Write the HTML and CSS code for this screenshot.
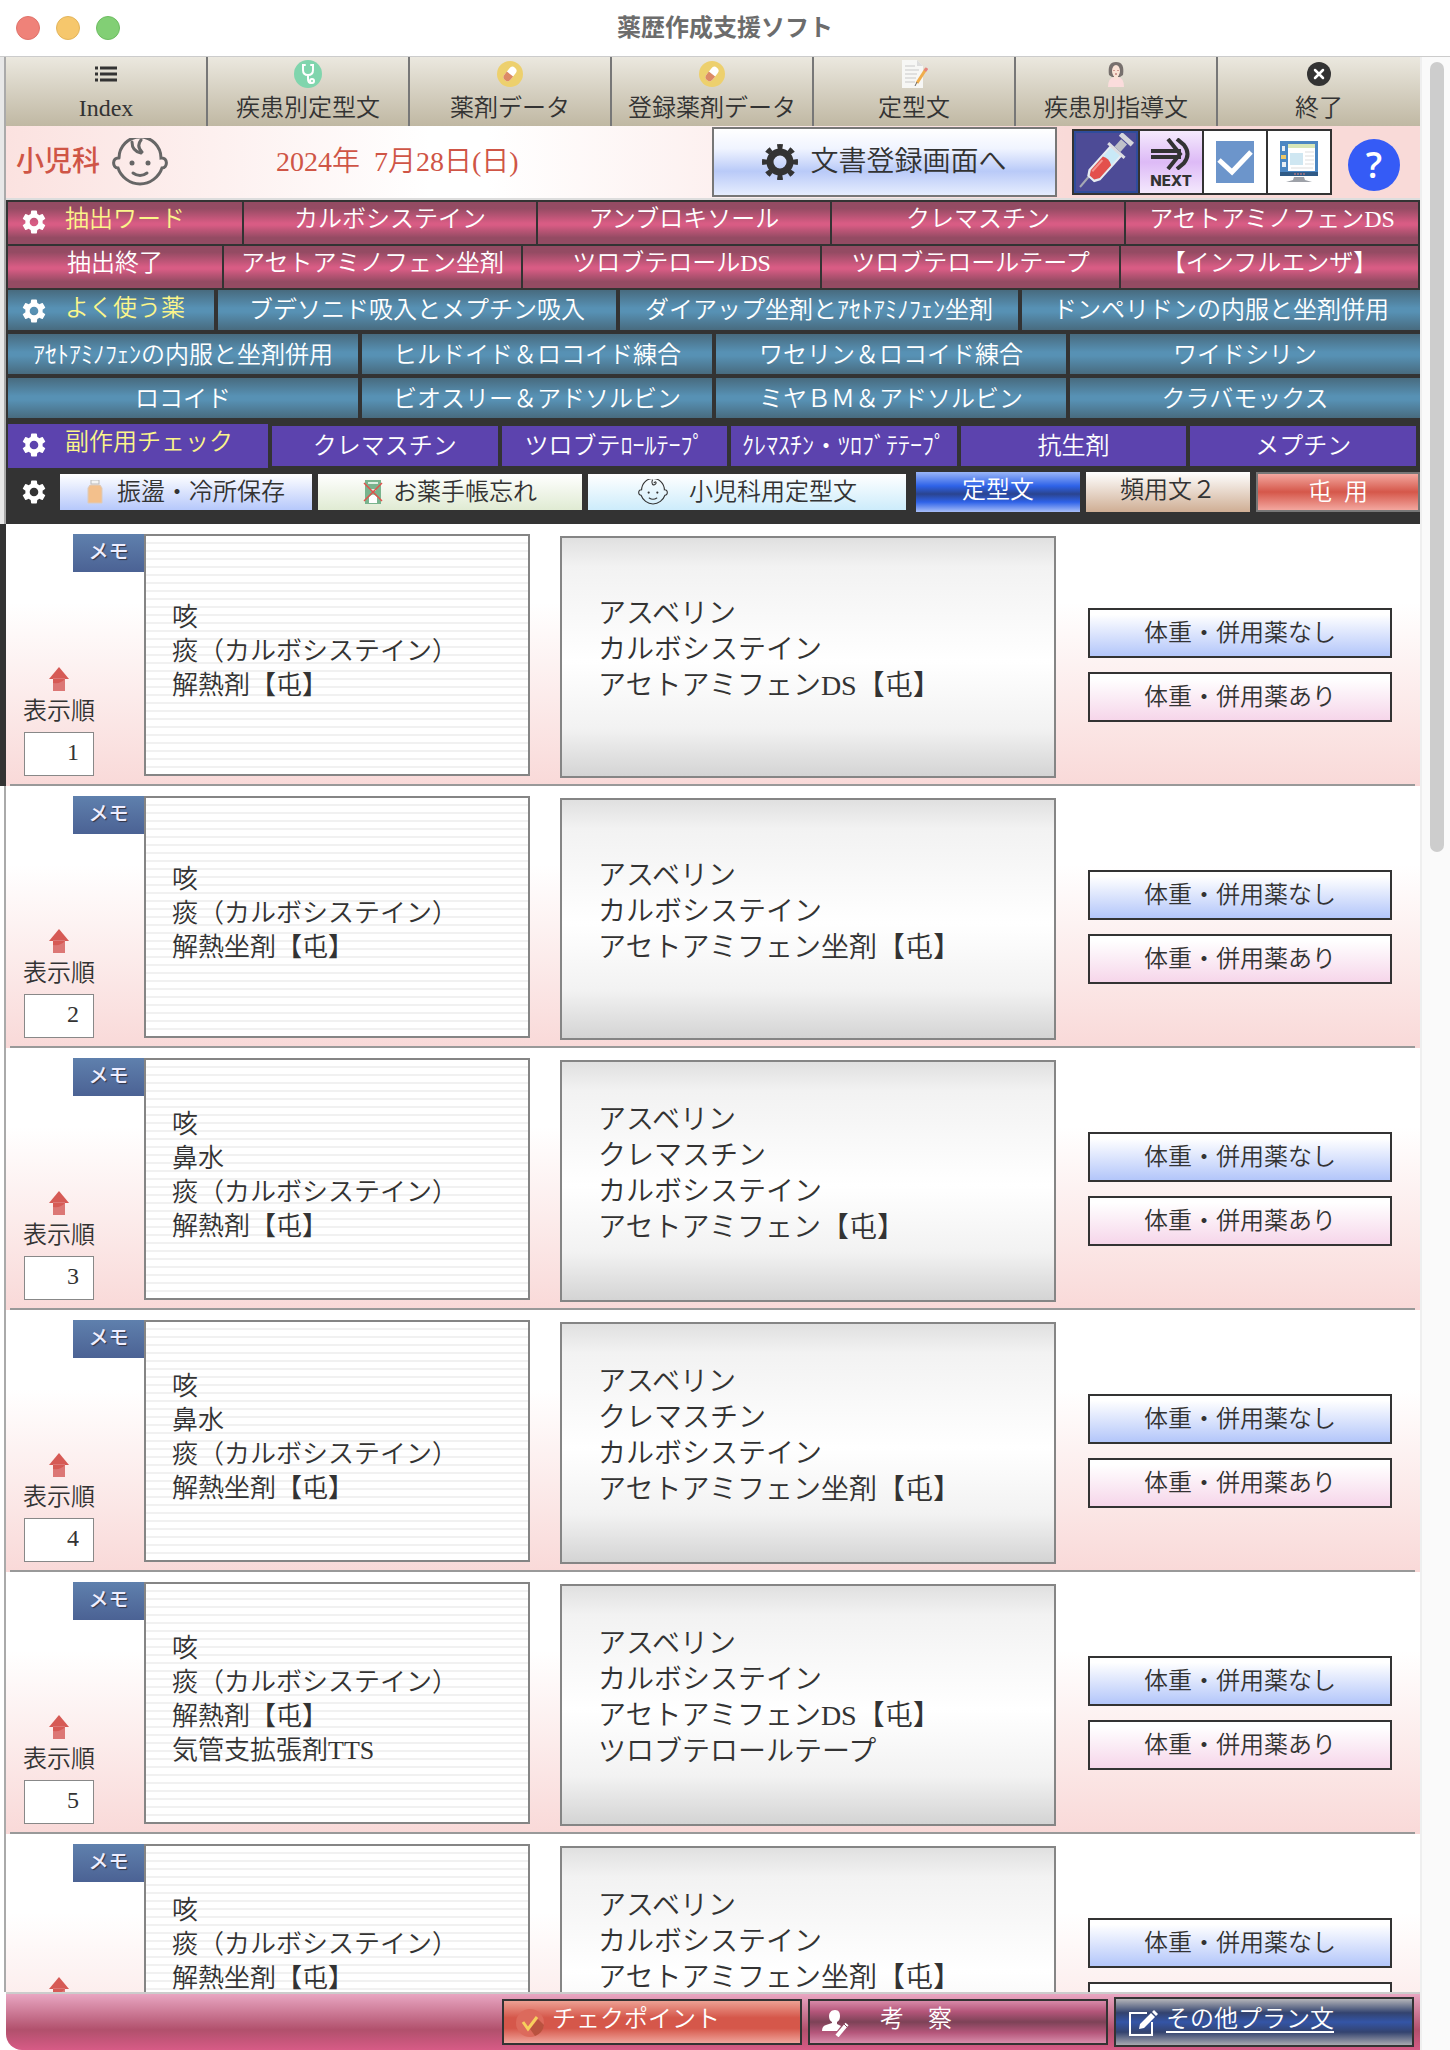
FILE: index.html
```html
<!DOCTYPE html>
<html lang="ja">
<head>
<meta charset="utf-8">
<meta name="viewport" content="width=device-width, initial-scale=1">
<title>薬歴作成支援ソフト</title>
<link rel="stylesheet" href="styles.css">
</head>
<body>
<svg class="sprite" aria-hidden="true">
  <symbol id="gear" viewBox="2 2 20 20"><path d="M19.14 12.94c.04-.3.06-.61.06-.94 0-.32-.02-.64-.07-.94l2.03-1.58a.49.49 0 0 0 .12-.61l-1.92-3.32a.49.49 0 0 0-.59-.22l-2.39.96a7 7 0 0 0-1.62-.94l-.36-2.54a.48.48 0 0 0-.48-.41h-3.84a.47.47 0 0 0-.47.41l-.36 2.54c-.59.24-1.13.57-1.62.94l-2.39-.96a.48.48 0 0 0-.59.22L2.74 8.87a.47.47 0 0 0 .12.61l2.03 1.58c-.05.3-.09.63-.09.94s.02.64.07.94l-2.03 1.58a.49.49 0 0 0-.12.61l1.92 3.32c.12.22.37.29.59.22l2.39-.96c.5.38 1.03.7 1.62.94l.36 2.54c.05.24.24.41.48.41h3.84c.24 0 .44-.17.47-.41l.36-2.54a6.8 6.8 0 0 0 1.62-.94l2.39.96c.22.08.47 0 .59-.22l1.92-3.32a.47.47 0 0 0-.12-.61zM12 15.6a3.6 3.6 0 1 1 0-7.2 3.6 3.6 0 0 1 0 7.2z"/></symbol>
  <symbol id="cog" viewBox="0 0 36 36"><g fill="none" stroke="#333"><circle cx="18" cy="18" r="10" stroke-width="7"/><circle cx="18" cy="18" r="15.500" stroke-width="5" pathLength="32" stroke-dasharray="1.800 2.200" stroke-dashoffset=".9"/></g></symbol>
  <symbol id="baby" viewBox="0 0 56 48"><g fill="none" stroke="currentColor" stroke-width="3" stroke-linecap="round"><path d="M7 20a21 21 0 0 1 42 0c7-1 7 10 1 10-3 9-12 16-22 16S9 39 6 30c-6 0-6-11 1-10"/><path d="M20 4c0 7 4 10 9 11M29 2c-4 5-2 9 1 12M21 35q7 5 14 0"/></g><circle cx="20" cy="25" r="2.500" fill="currentColor"/><circle cx="36" cy="25" r="2.500" fill="currentColor"/></symbol>
  <symbol id="baby-thin" viewBox="0 0 56 48"><g fill="none" stroke="currentColor" stroke-width="2" stroke-linecap="round"><path d="M7 20a21 21 0 0 1 42 0c7-1 7 10 1 10-3 9-12 16-22 16S9 39 6 30c-6 0-6-11 1-10"/><path d="M27 2c-3 6 1 11 5 8s0-7-2-3M21 35q7 5 14 0"/></g><circle cx="20" cy="25" r="2" fill="currentColor"/><circle cx="36" cy="25" r="2" fill="currentColor"/></symbol>
  <symbol id="pill" viewBox="0 0 28 28"><circle cx="14" cy="14" r="13" fill="#edd06d"/><g transform="rotate(38 14 14)"><rect x="10" y="6" width="8" height="16" rx="4" fill="#fff"/><path d="M10 14h8v4a4 4 0 0 1-8 0z" fill="#dc8a66"/></g></symbol>
  <symbol id="arrow-up" viewBox="0 0 20 24"><path d="M10 0l10 12H0z" fill="#d65a55"/><path d="M4 11h12v13H4z" fill="#dc7775"/><path d="M4 12h12q-4 5-12 4z" fill="#d65a55"/></symbol>
</svg>

<header class="titlebar">
  <div class="lights"><span class="light red"></span><span class="light amber"></span><span class="light green"></span></div>
  <h1>薬歴作成支援ソフト</h1>
</header>

<div class="window">
<div class="body">
  <div class="top">
    <nav class="toolbar">
      <button><svg width="24" height="28" viewBox="0 0 24 28"><path d="M1 8h3M6 8h17M1 14h3M6 14h17M1 20h3M6 20h17" stroke="#333" stroke-width="3"/></svg>Index</button>
      <button><svg width="28" height="28" viewBox="0 0 28 28"><circle cx="14" cy="14" r="14" fill="#80d5ad"/><g fill="none" stroke="#fff" stroke-width="2" stroke-linecap="round"><path d="M11 5H9v5q0 5 5 5t5-5V5h-2M14 15v4q0 4 3 4"/><circle cx="18" cy="21" r="2"/></g></svg>疾患別定型文</button>
      <button><svg width="28" height="28"><use href="#pill"/></svg>薬剤データ</button>
      <button><svg width="28" height="28"><use href="#pill"/></svg>登録薬剤データ</button>
      <button><svg width="28" height="28" viewBox="0 0 28 28"><path d="M2 0h15l6 6v22H2z" fill="#f7f7f5"/><path d="M17 0v6h6z" fill="#ddd"/><path d="M5 6h10M5 10h14M5 14h12M5 18h11M5 22h10" stroke="#c9c9c9"/><path d="M26 9L17 23" stroke="#f0ad4c" stroke-width="3"/><path d="M27 8l-2 3" stroke="#e5827e" stroke-width="3"/><path d="M17 22l-2 4" stroke="#666"/></svg>定型文</button>
      <button><svg width="28" height="28" viewBox="0 0 28 28"><path d="M7 15Q5 2 14 2t7 13l-3 2h-8z" fill="#77706d"/><ellipse cx="14" cy="11" rx="4" ry="6" fill="#fae2d5"/><path d="M6 27q0-9 6-10h4q6 1 6 10z" fill="#fbdcdc"/><path d="M12 15h4v3l-2 2-2-2z" fill="#fae2d5"/><path d="M12 10v1M16 10v1M13 14h2" stroke="#a55"/></svg>疾患別指導文</button>
      <button><svg width="24" height="28" viewBox="0 0 24 28"><circle cx="12" cy="14" r="12" fill="#333"/><path d="M8 10l8 8M16 10l-8 8" stroke="#fff" stroke-width="2.500" stroke-linecap="round"/></svg>終了</button>
    </nav>

    <div class="infobar">
      <strong class="dept">小児科</strong>
      <svg class="baby" width="56" height="48"><use href="#baby"/></svg>
      <time class="date" datetime="2024-07-28">2024年&nbsp; 7月28日(日)</time>
      <button class="register"><svg width="36" height="36"><use href="#cog"/></svg>文書登録画面へ</button>
      <div class="tools">
        <button class="tool syringe" aria-label="注射"><svg width="58" height="58" viewBox="0 0 58 58"><path d="M3 54L14 41" stroke="#a5a8b4" stroke-width="2"/><g transform="rotate(42 29 29)"><path d="M22 14h14v32l-3 5h-8l-3-5z" fill="#c9e9f7" stroke="#e8edf2" stroke-width="2"/><path d="M23 27q6-3 12 1v17l-3 5h-6l-3-5z" fill="#e3504c"/><path d="M25 30v15" stroke="#f4938d" stroke-width="2"/><path d="M18 12h22v3H18z" fill="#dcdde2"/><path d="M25 2h8v10h-8z" fill="#bfc1c9"/><path d="M21-4h16v5H21z" fill="#d5d6dc"/></g></svg></button>
        <button class="tool next"><svg width="40" height="32" viewBox="0 0 40 32"><g fill="none" stroke="#333" stroke-width="4"><path d="M0 13h30M0 19h30M17 1l12 15-12 15M26 1l7 6q7 9 0 18l-7 6"/></g></svg>NEXT</button>
        <button class="tool" aria-label="チェック"><svg width="38" height="42" viewBox="0 0 38 42"><path d="M0 0h38v42H0z" fill="#6c95cb"/><path d="M3 19l13 12L35 11" fill="none" stroke="#fff" stroke-width="5"/></svg></button>
        <button class="tool" aria-label="画面"><svg width="40" height="42" viewBox="0 0 40 42"><path d="M1 0h38v35H1z" fill="#4b86c2"/><path d="M9 3h27v27H9z" fill="#fff"/><path d="M9 3h27v4H9z" fill="#d7e6b8"/><path d="M11 12h13v12H11z" fill="#cfe7f2"/><path d="M26 11h9M26 15h9M26 19h9M26 23h9M12 27h22" stroke="#ddd"/><path d="M3 5h3v5H3zM3 21h4v5H3z" fill="#e8eef4"/><path d="M2 14h5v4H2z" fill="#efc766"/><path d="M1 31h38v4H1z" fill="#2f5a86"/><path d="M15 33h12" stroke="#e5827e" stroke-dasharray="2 1"/><path d="M15 36h10l1 3 7 2H7l7-2z" fill="#9da1a8"/></svg></button>
      </div>
      <button class="help" aria-label="ヘルプ">?</button>
    </div>

    <div class="panel">
      <div class="row rose words">
        <button class="label"><svg width="24" height="24"><use href="#gear"/></svg>抽出ワード</button>
        <button>カルボシステイン</button><button>アンブロキソール</button><button>クレマスチン</button><button>アセトアミノフェンDS</button>
      </div>
      <div class="row rose words-more">
        <button>抽出終了</button><button>アセトアミノフェン坐剤</button><button>ツロブテロールDS</button><button>ツロブテロールテープ</button><button>【インフルエンザ】</button>
      </div>
      <div class="row teal drugs">
        <button class="label"><svg width="24" height="24"><use href="#gear"/></svg>よく使う薬</button>
        <button>ブデソニド吸入とメプチン吸入</button><button>ダイアップ坐剤と&#xFF71;&#xFF7E;&#xFF84;&#xFF71;&#xFF90;&#xFF89;&#xFF8C;&#xFF6A;&#xFF9D;坐剤</button><button>ドンペリドンの内服と坐剤併用</button>
      </div>
      <div class="row teal quarters">
        <button>&#xFF71;&#xFF7E;&#xFF84;&#xFF71;&#xFF90;&#xFF89;&#xFF8C;&#xFF6A;&#xFF9D;の内服と坐剤併用</button><button>ヒルドイド&#xFF06;ロコイド練合</button><button>ワセリン&#xFF06;ロコイド練合</button><button>ワイドシリン</button>
      </div>
      <div class="row teal quarters">
        <button>ロコイド</button><button>ビオスリー&#xFF06;アドソルビン</button><button>ミヤ&#xFF22;&#xFF2D;&#xFF06;アドソルビン</button><button>クラバモックス</button>
      </div>
      <div class="row violet effects">
        <button class="label"><svg width="24" height="24"><use href="#gear"/></svg>副作用チェック</button>
        <button>クレマスチン</button><button>ツロブテ&#xFF9B;&#xFF70;&#xFF99;&#xFF83;&#xFF70;&#xFF8C;&#xFF9F;</button><button>&#xFF78;&#xFF9A;&#xFF8F;&#xFF7D;&#xFF81;&#xFF9D;・&#xFF82;&#xFF9B;&#xFF8C;&#xFF9E;&#xFF83;&#xFF83;&#xFF70;&#xFF8C;&#xFF9F;</button><button>抗生剤</button><button>メプチン</button>
      </div>
      <div class="row presets">
        <button class="bare" aria-label="設定"><svg width="24" height="24"><use href="#gear"/></svg></button>
        <button class="ice"><svg width="16" height="24" viewBox="0 0 16 24"><path d="M4 0h8v4H4z" fill="#f5f5f5" stroke="#bbb"/><path d="M3 5h10l2 3v15H1V8z" fill="#f3c08c" stroke="#dccbbd"/></svg>振盪・冷所保存</button>
        <button class="leaf"><svg width="20" height="24" viewBox="0 0 20 24"><path d="M2 0h16v24H2z" fill="#79b48d"/><path d="M6 17q4-5 8 0v6H6z" fill="#fff"/><path d="M5 3h10M8 10h5" stroke="#dff0e2" stroke-width="2"/><path d="M1 3l18 18M19 3L1 21" stroke="#e0524c" stroke-width="1.500"/></svg>お薬手帳忘れ</button>
        <button class="sky"><svg width="32" height="26"><use href="#baby-thin"/></svg>小児科用定型文</button>
        <button class="cobalt">定型文</button>
        <button class="sand">頻用文&#xFF12;</button>
        <button class="coral">屯&ensp;用</button>
      </div>
    </div>
  </div>

  <main class="records">
    <article class="record selected">
      <div class="order"><svg width="20" height="24"><use href="#arrow-up"/></svg><label for="n1">表示順</label><input id="n1" value="1"></div>
      <span class="tag">メモ</span>
      <div class="memo">咳<br>痰&#xFF08;カルボシステイン&#xFF09;<br>解熱剤【屯】</div>
      <div class="plan">アスベリン<br>カルボシステイン<br>アセトアミフェンDS【屯】</div>
      <div class="actions"><button class="none">体重・併用薬なし</button><button class="with">体重・併用薬あり</button></div>
    </article>
    <article class="record">
      <div class="order"><svg width="20" height="24"><use href="#arrow-up"/></svg><label for="n2">表示順</label><input id="n2" value="2"></div>
      <span class="tag">メモ</span>
      <div class="memo">咳<br>痰&#xFF08;カルボシステイン&#xFF09;<br>解熱坐剤【屯】</div>
      <div class="plan">アスベリン<br>カルボシステイン<br>アセトアミフェン坐剤【屯】</div>
      <div class="actions"><button class="none">体重・併用薬なし</button><button class="with">体重・併用薬あり</button></div>
    </article>
    <article class="record">
      <div class="order"><svg width="20" height="24"><use href="#arrow-up"/></svg><label for="n3">表示順</label><input id="n3" value="3"></div>
      <span class="tag">メモ</span>
      <div class="memo">咳<br>鼻水<br>痰&#xFF08;カルボシステイン&#xFF09;<br>解熱剤【屯】</div>
      <div class="plan">アスベリン<br>クレマスチン<br>カルボシステイン<br>アセトアミフェン【屯】</div>
      <div class="actions"><button class="none">体重・併用薬なし</button><button class="with">体重・併用薬あり</button></div>
    </article>
    <article class="record">
      <div class="order"><svg width="20" height="24"><use href="#arrow-up"/></svg><label for="n4">表示順</label><input id="n4" value="4"></div>
      <span class="tag">メモ</span>
      <div class="memo">咳<br>鼻水<br>痰&#xFF08;カルボシステイン&#xFF09;<br>解熱坐剤【屯】</div>
      <div class="plan">アスベリン<br>クレマスチン<br>カルボシステイン<br>アセトアミフェン坐剤【屯】</div>
      <div class="actions"><button class="none">体重・併用薬なし</button><button class="with">体重・併用薬あり</button></div>
    </article>
    <article class="record">
      <div class="order"><svg width="20" height="24"><use href="#arrow-up"/></svg><label for="n5">表示順</label><input id="n5" value="5"></div>
      <span class="tag">メモ</span>
      <div class="memo">咳<br>痰&#xFF08;カルボシステイン&#xFF09;<br>解熱剤【屯】<br>気管支拡張剤TTS</div>
      <div class="plan">アスベリン<br>カルボシステイン<br>アセトアミフェンDS【屯】<br>ツロブテロールテープ</div>
      <div class="actions"><button class="none">体重・併用薬なし</button><button class="with">体重・併用薬あり</button></div>
    </article>
    <article class="record">
      <div class="order"><svg width="20" height="24"><use href="#arrow-up"/></svg></div>
      <span class="tag">メモ</span>
      <div class="memo">咳<br>痰&#xFF08;カルボシステイン&#xFF09;<br>解熱坐剤【屯】<br>&nbsp;</div>
      <div class="plan">アスベリン<br>カルボシステイン<br>アセトアミフェン坐剤【屯】<br>&nbsp;</div>
      <div class="actions"><button class="none">体重・併用薬なし</button><button class="with" aria-label="体重・併用薬あり"></button></div>
    </article>
  </main>

  <footer class="footer">
    <button class="check"><svg width="28" height="28" viewBox="0 0 28 28"><circle cx="14" cy="14" r="14" fill="#dc6a5c"/><path d="M14 20l8-10 6 6a14 14 0 0 1-9 11z" fill="#b9523f"/><path d="M7 13l5 7 9-12" fill="none" stroke="#f7cf5c" stroke-width="3"/></svg>チェクポイント</button>
    <button class="study"><svg width="28" height="28" viewBox="0 0 28 28"><path d="M13 1c4 0 5 3 5 6s-1 5-3 6v2l4 2-4 5H0q0-5 4-6l6-2v-1c-2-1-3-3-3-6s2-6 6-6z" fill="#fff"/><path d="M25 15L15 27" stroke="#fff" stroke-width="4"/><path d="M22 15l3 3" stroke="#8d4660"/></svg>考&#x3000;察</button>
    <button class="other"><svg width="30" height="28" viewBox="0 0 30 28"><path d="M19 4H2v22h22V13" fill="none" stroke="#fff" stroke-width="2"/><path d="M11 20l1-5L23 4l4 4-11 11zM24 3l2-2 4 4-2 2z" fill="#fff"/></svg><u>その他プラン文</u></button>
  </footer>
</div>
<div class="scroll"><div class="thumb"></div></div>
</div>
</body>
</html>
```

FILE: styles.css
```css
* { box-sizing: border-box; }

body {
  margin: 0;
  height: 100vh;
  display: flex;
  flex-direction: column;
  overflow: hidden;
  background: #fff;
  color: #333;
  font: 350 24px/32px "Liberation Serif", "Noto Sans CJK JP", serif;
}

button {
  margin: 0;
  padding: 0;
  border: 0;
  font: inherit;
  color: inherit;
  background: none;
  white-space: nowrap;
  display: flex;
  align-items: center;
  justify-content: center;
}

svg { flex: none; }
.sprite { position: absolute; width: 0; height: 0; }

/* Title bar */
.titlebar {
  flex: none;
  height: 57px;
  display: grid;
  grid-template-columns: 1fr auto 1fr;
  align-items: center;
  border-bottom: 1px solid #ccc;
}
.titlebar h1 { margin: 0; font-size: 24px; font-weight: 700; color: #6c6c6c; }
.lights { display: flex; gap: 16px; padding-left: 16px; }
.light { width: 24px; height: 24px; border-radius: 50%; border: 1px solid; }
.red { background: #ef8279; border-color: #e0736b; }
.amber { background: #f6c76c; border-color: #e3b55b; }
.green { background: #82cf75; border-color: #6dbd61; }

.window { flex: 1; min-height: 0; display: flex; }
.body { flex: 1; min-width: 0; display: flex; flex-direction: column; }

.scroll { width: 30px; padding: 5px 6px 0 8px; background: #fafafa; border-left: 2px solid #efefef; }
.thumb { height: 790px; border-radius: 8px; background: #cdcdcd; }

.top { flex: none; padding-left: 6px; background: linear-gradient(to right, #e8e8e8 4px, #aaa 4px 6px, transparent 6px); }

/* Toolbar */
.toolbar { display: grid; grid-template-columns: repeat(7, 1fr); height: 69px; background: linear-gradient(#ebe8df, #c0b8a3); }
.toolbar button { flex-direction: column; justify-content: flex-start; gap: 4px; padding-top: 3px; border-right: 2px solid #777; }
.toolbar button:last-child { border-right: 0; }

/* Department and date */
.infobar {
  height: 74px;
  display: flex;
  align-items: center;
  padding: 0 20px 0 10px;
  font-size: 28px;
  border-bottom: 2px solid #ddd;
  background: linear-gradient(to right, #fbe2e0, #fff 30%, #fff 34%, #f9dad8 75%);
}
.dept { color: #cf5546; font-weight: 500; }
.baby { margin-left: 12px; color: #666; }
.date { margin-left: 108px; color: #cf5546; }
.register { margin-left: auto; width: 345px; height: 70px; gap: 12px; border: 2px solid #777; background: linear-gradient(#fff, #f0f4ff 30%, #b9caf8 64%, #e6edfe); }
.tools { display: flex; margin: 0 16px 0 15px; border: 2px solid #333; }
.tool { width: 64px; height: 62px; flex-direction: column; background: #fff; }
.tool + .tool { border-left: 2px solid #333; }
.tool.syringe { background: #4d4b96; border: 2px solid #2f4c9b; }
.tool.next { background: linear-gradient(#f5eafd, #ddbaf6 50%, #f4e8fd); font: 800 15px/18px Inter, "Liberation Sans", sans-serif; gap: 2px; padding-top: 4px; }
.help { width: 52px; height: 52px; margin-top: 6px; border-radius: 50%; background: #355bf6; color: #fff; font: 600 36px/48px "Open Sans", sans-serif; }

/* Shortcut panel */
.panel { background: #333; color: #fff; padding: 2px 0 12px 2px; display: flex; flex-direction: column; gap: 2px; }
.row { display: grid; gap: 4px; height: 42px; }
.row .label { justify-content: flex-start; gap: 19px; padding-left: 14px; color: #fbf58a; }
.row .label svg, .bare svg { fill: #fff; }
.label svg { margin-top: 6px; }
.rose { gap: 2px; padding-right: 2px; }
.rose button { padding-bottom: 8px; background: linear-gradient(#944b63 15%, #d85c84 50%, #d85c84 55%, #944b63 85%); }
.words { grid-template-columns: 234px repeat(4, minmax(0, 1fr)); }
.words-more { grid-template-columns: 214px repeat(4, minmax(0, 1fr)); }
.teal { margin-bottom: 2px; height: 40px; }
.teal button { background: linear-gradient(#486b7f, #5791b4 45%, #5791b4 55%, #486b7f); }
.drugs { grid-template-columns: 206px repeat(3, minmax(0, 1fr)); }
.drugs .label { padding-bottom: 4px; }
.quarters { grid-template-columns: repeat(4, minmax(0, 1fr)); }
.quarters button { padding-top: 2px; }
.violet { height: 44px; margin-top: 2px; }
.violet button { margin: 2px 0; background: #5c43ae; }
.violet .label { margin: 0; padding-bottom: 8px; }
.effects { grid-template-columns: 260px repeat(5, minmax(0, 1fr)); padding-right: 4px; }
.presets { grid-template-columns: 46px 252fr 264fr 318fr 168fr 164fr 164fr; gap: 6px; height: 40px; margin-top: 2px; color: #333; }
.presets .bare { justify-content: flex-start; padding-left: 14px; }
.ice, .leaf, .sky { height: 36px; align-self: center; gap: 14px; }
.ice { background: linear-gradient(#fff, #b6c8fb); }
.leaf { background: linear-gradient(#fff, #e0ebd3); gap: 10px; }
.sky { background: linear-gradient(#fff, #cdecfb); gap: 20px; }
.cobalt { margin-left: 4px; padding-bottom: 4px; color: #fff; background: linear-gradient(#9ab6f8, #2e62e8 35%, #2a448f 55%, #2e62e8 75%, #a9bff8); }
.sand { background: linear-gradient(#fff, #cfae94); padding-bottom: 4px; }
.coral { color: #fff; border: 2px solid #777; background: linear-gradient(#f3a79f, #d5574a 50%, #f3a79f); }

/* Records */
.records { flex: 1; min-height: 0; overflow: hidden; }
.record {
  height: 262px;
  display: grid;
  grid-template-columns: 67px 71px 416px 528px 304px;
  align-items: start;
  padding: 10px 0 0 6px;
  background:
    linear-gradient(to right, #fff 4px, #aaa 4px 6px, transparent 6px),
    linear-gradient(#999, #999) 10px 100% / calc(100% - 15px) 2px no-repeat,
    linear-gradient(#fff 30%, #f9d9d8);
}
.record.selected {
  background:
    linear-gradient(to right, #333 6px, transparent 6px),
    linear-gradient(#999, #999) 10px 100% / calc(100% - 15px) 2px no-repeat,
    linear-gradient(#fff 30%, #f9d9d8);
}
.order { width: 106px; padding-top: 133px; display: flex; flex-direction: column; align-items: center; }
.order label { margin: 4px 0 5px; }
.order input { width: 70px; height: 44px; padding: 0 14px 4px 0; border: 1px solid #888; background: #fff; color: #333; font: inherit; text-align: right; }
.tag { height: 38px; text-align: center; font-size: 20px; font-weight: 500; line-height: 36px; color: #eef; text-shadow: 1px 1px 1px #334; background: linear-gradient(#5f80ad, #4b6294); }
.memo, .plan { height: 242px; border: 2px solid #858585; align-content: center; }
.memo {
  margin-right: 30px;
  padding: 0 0 6px 26px;
  font-size: 26px;
  line-height: 34px;
  background: linear-gradient(#fff 6px, #f1f1f1 6px) 0 0 / 100% 8px;
}
.plan {
  margin: 2px 32px 0 0;
  padding: 0 0 14px 36px;
  font-size: 28px;
  line-height: 36px;
  background: linear-gradient(#e0e0e0, #f2f2f2 12%, #fff 52%, #f2f2f2 80%, #d4d4d4);
}
.actions { display: grid; gap: 14px; padding-top: 74px; }
.actions button { height: 50px; border: 2px solid #333; }
.none { background: linear-gradient(#fff 10%, #b3c6fa); }
.with { background: linear-gradient(#fff 10%, #f6d6ea); }

/* Footer */
.footer {
  flex: none;
  height: 58px;
  display: flex;
  justify-content: flex-end;
  align-items: center;
  gap: 6px;
  padding-right: 6px;
  margin-left: 6px;
  border-top: 2px solid #ccc;
  border-bottom-left-radius: 16px;
  color: #fff;
  background: linear-gradient(#e9a6c2, #b1506c 64%, #d75b86);
}
.footer button { width: 300px; height: 46px; justify-content: flex-start; border: 2px solid #333; padding: 0 0 6px 12px; gap: 8px; }
.footer svg { margin-top: 8px; }
.check { background: linear-gradient(#eda093, #d5574a 40%, #d5574a 65%, #f0a59c); }
.footer .study { gap: 30px; background: linear-gradient(#d889a8, #b4567a 25%, #7d4257 50%, #b4567a 75%, #d88dab); }
.footer .other { height: 50px; background: linear-gradient(#b5b5b9, #33436f 30%, #3455a6 50%, #33436f 72%, #a9a9b0); }
.other u { text-underline-offset: 4px; }
```
